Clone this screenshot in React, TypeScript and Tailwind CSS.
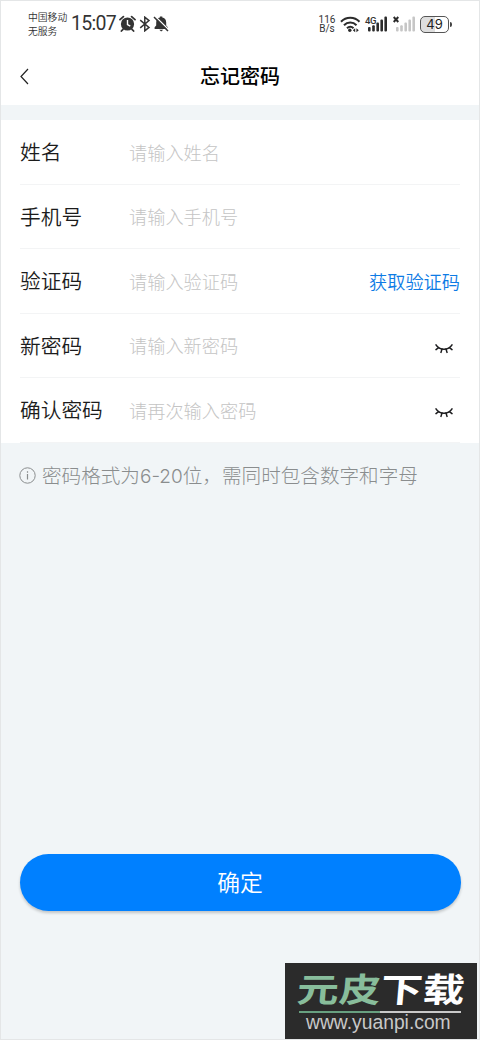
import React, { useState } from "react";
import clsx from "clsx";

interface FieldProps {
  label: string;
  placeholder: string;
  secret?: boolean;
  children?: React.ReactNode;
}

function ClosedEye() {
  return (
    <svg
      width="18"
      height="12"
      viewBox="0 0 18 12"
      fill="none"
      stroke="#1c1c1e"
      strokeWidth="1.5"
      strokeLinecap="round"
    >
      <path d="M1 1.8C4.6 7.6 13.4 7.6 17 1.8" />
      <path d="M3.6 4.6L1 6.6M7 6L6 9.4M11 6L12 9.4M14.4 4.6L17 6.6" />
    </svg>
  );
}

function Field({ label, placeholder, secret, children }: FieldProps) {
  const [visible, setVisible] = useState(false);

  return (
    <label className="mx-[19px] flex h-[64.5px] items-center border-b border-[#f3f4f5]">
      <span className="w-[109px] shrink-0 text-[20.7px] text-[#1c1c1c]">
        {label}
      </span>
      <input
        className="mt-px w-0 min-w-0 flex-1 bg-transparent text-[18.2px] font-light outline-none placeholder:text-[#c4c4c4]"
        type={secret && !visible ? "password" : "text"}
        placeholder={placeholder}
      />
      {secret && (
        <button
          type="button"
          className="mt-[7px] mr-[7px]"
          onClick={() => setVisible(!visible)}
        >
          <ClosedEye />
        </button>
      )}
      {children}
    </label>
  );
}

function Signal({ faded }: { faded?: boolean }) {
  return (
    <svg
      width="20"
      height="16"
      viewBox="0 0 20 16"
      className={clsx(faded ? "text-[#c6c6c6]" : "text-[#2b2b2b]")}
      fill="currentColor"
    >
      <rect x="0" y="11" width="2.6" height="4.5" rx="1" />
      <rect x="4.2" y="9.3" width="2.6" height="6.2" rx="1" />
      <rect x="8.4" y="6.5" width="2.6" height="9" rx="1" />
      <rect x="12.4" y="3.6" width="2.6" height="11.9" rx="1" />
      <rect x="16.4" y="0.4" width="2.6" height="15.1" rx="1" />
    </svg>
  );
}

function StatusBar() {
  return (
    <div className="flex h-[46px] items-center pl-[27px] text-[#333]">
      <div className="w-[43px] text-[9.8px] leading-[14px] whitespace-nowrap">
        <p>中国移动</p>
        <p>无服务</p>
      </div>
      <span className="w-[47px] font-['Roboto'] text-[19.5px] font-normal tracking-[-0.7px] whitespace-nowrap">
        15:07
      </span>
      <svg width="18" height="18" viewBox="0 0 18 18" className="ml-px" fill="none">
        <circle cx="8.5" cy="9" r="6.6" fill="#333" />
        <path d="M1 4.6L4.4 1.6M12.6 1.6L16 4.6M4 14.3L2.4 16M13 14.3L14.6 16" stroke="#333" strokeWidth="1.8" strokeLinecap="round" />
        <path d="M8.5 5V9.5L11.3 11.2" stroke="white" strokeWidth="1.4" />
      </svg>
      <svg width="12" height="16" viewBox="0 0 12 16" className="ml-[2px]" fill="none" stroke="#333" strokeWidth="1.5">
        <path d="M1.2 4.2L10 11.4L5.8 14.8V1.2L10 4.6L1.2 11.8" />
      </svg>
      <svg width="17" height="18" viewBox="0 0 17 18" className="ml-[2px]">
        <path d="M1.6 14V12.3L3.2 10.5V7.5C3.2 4.6 4.6 3 6.9 2.5V1.4H9.3V2.5C11.6 3 13.2 4.6 13.2 7.5V10.5L14.8 12.3V14Z" fill="#333" />
        <path d="M6.3 14.7H10.2L8.2 16.6Z" fill="#333" />
        <path d="M1.8 1L16.2 15.2" stroke="white" strokeWidth="1.4" />
        <path d="M1 2L15 16" stroke="#333" strokeWidth="1.5" />
      </svg>
      <div className="ml-auto w-[18px] text-center font-['Roboto'] text-[10px] leading-[9.5px] font-normal">
        <p>116</p>
        <p>B/s</p>
      </div>
      <svg width="21" height="17" viewBox="0 0 21 17" className="ml-[4px]" fill="none" stroke="#2b2b2b" strokeWidth="2">
        <path d="M1 5.8C6 0.4 14.5 0.4 19.5 5.8M4 9.2C7.5 5.5 13 5.5 16.5 9.2M7 12.3C8.9 10.3 11.6 10.3 13.5 12.3" />
        <circle cx="9.8" cy="14.2" r="1.7" fill="#2b2b2b" stroke="none" />
        <path d="M15.2 12.2L12.8 14.2L15.2 16.2ZM16.4 12.2L18.8 14.2L16.4 16.2Z" fill="#2b2b2b" stroke="none" />
      </svg>
      <div className="relative ml-[7px]">
        <span className="absolute top-0 -left-[3px] font-['Roboto'] text-[9.5px] leading-[9px] font-medium tracking-[-0.3px]">
          4G
        </span>
        <Signal />
      </div>
      <div className="relative ml-[8px]">
        <svg width="6" height="7" viewBox="0 0 6 7" className="absolute top-0 -left-[3px]" stroke="#2b2b2b" strokeWidth="1.9">
          <path d="M0.7 1L5.3 6M5.3 1L0.7 6" />
        </svg>
        <Signal faded />
      </div>
      <div className="mr-px ml-[4px] flex h-[17px] w-[29px] items-center justify-center rounded-[5px] border-[1.5px] border-[#555] bg-linear-to-r from-[#dedede] from-50% to-white to-50% font-['Inter'] text-[13px] leading-none font-normal text-[#222]">
        49
      </div>
      <i className="mr-[27px] h-[5px] w-[2px] rounded-r bg-[#444]" />
    </div>
  );
}

function Watermark() {
  return (
    <div className="absolute right-[2px] bottom-0 h-[76px] w-[192px] bg-[#2b2b2b]">
      <p className="absolute top-[6px] left-[14px] origin-top-left scale-x-[1.25] -skew-x-4 text-[33.5px] leading-[38px] font-bold whitespace-nowrap text-white">
        <span className="text-[#88bd9b]">元皮</span>下载
      </p>
      <div className="absolute top-[48px] left-[14px] flex h-[2px] w-[162px]">
        <i className="flex-1 bg-[#68a080]" />
        <i className="flex-1 bg-[#c9c9c9]" />
      </div>
      <p className="absolute top-[48px] left-[21px] font-['Liberation_Sans'] text-[19.3px] leading-[23px] whitespace-nowrap text-[#c8c8c8]">
        www.yuanpi.com
      </p>
    </div>
  );
}

function App() {
  return (
    <div className="relative flex h-[1040px] w-[480px] flex-col overflow-hidden border border-[#e4e6e7] bg-[#f1f5f7] font-['Noto_Sans_CJK_SC',sans-serif] font-[350]">
      <header className="h-[104px] bg-white">
        <StatusBar />
        <div className="relative flex h-[58px] items-center justify-center">
          <svg width="9" height="17" viewBox="0 0 9 17" className="absolute left-[19px]" fill="none" stroke="#222" strokeWidth="1.2">
            <path d="M8 1L1 8.5L8 16" />
          </svg>
          <h1 className="text-[20px] font-medium text-black">忘记密码</h1>
        </div>
      </header>

      <form className="mt-[15px] bg-white">
        <Field label="姓名" placeholder="请输入姓名" />
        <Field label="手机号" placeholder="请输入手机号" />
        <Field label="验证码" placeholder="请输入验证码">
          <button type="button" className="mt-px text-[18.2px] text-[#0d7be5]">
            获取验证码
          </button>
        </Field>
        <Field label="新密码" placeholder="请输入新密码" secret />
        <Field label="确认密码" placeholder="请再次输入密码" secret />
      </form>

      <div className="mt-[18px] flex h-[30px] items-center pl-[18px] text-[#8a8d8e]">
        <svg width="17" height="17" viewBox="0 0 17 17" fill="none" stroke="currentColor">
          <circle cx="8.5" cy="8.5" r="7.7" />
          <path d="M8.5 7V12.5M8.5 4.3V5.8" strokeWidth="1.2" />
        </svg>
        <p className="ml-[6px] text-[19.6px] font-light whitespace-nowrap">
          密码格式为<span className="font-['Inter'] text-[19px]">6-20</span>位，需同时包含数字和字母
        </p>
      </div>

      <button className="mx-[18.5px] mt-[363.5px] h-[57px] rounded-full bg-[#0080ff] text-[22.8px] text-white shadow-[0_2px_3px_rgba(0,0,0,0.2)]">
        确定
      </button>

      <Watermark />
    </div>
  );
}

export default App;
